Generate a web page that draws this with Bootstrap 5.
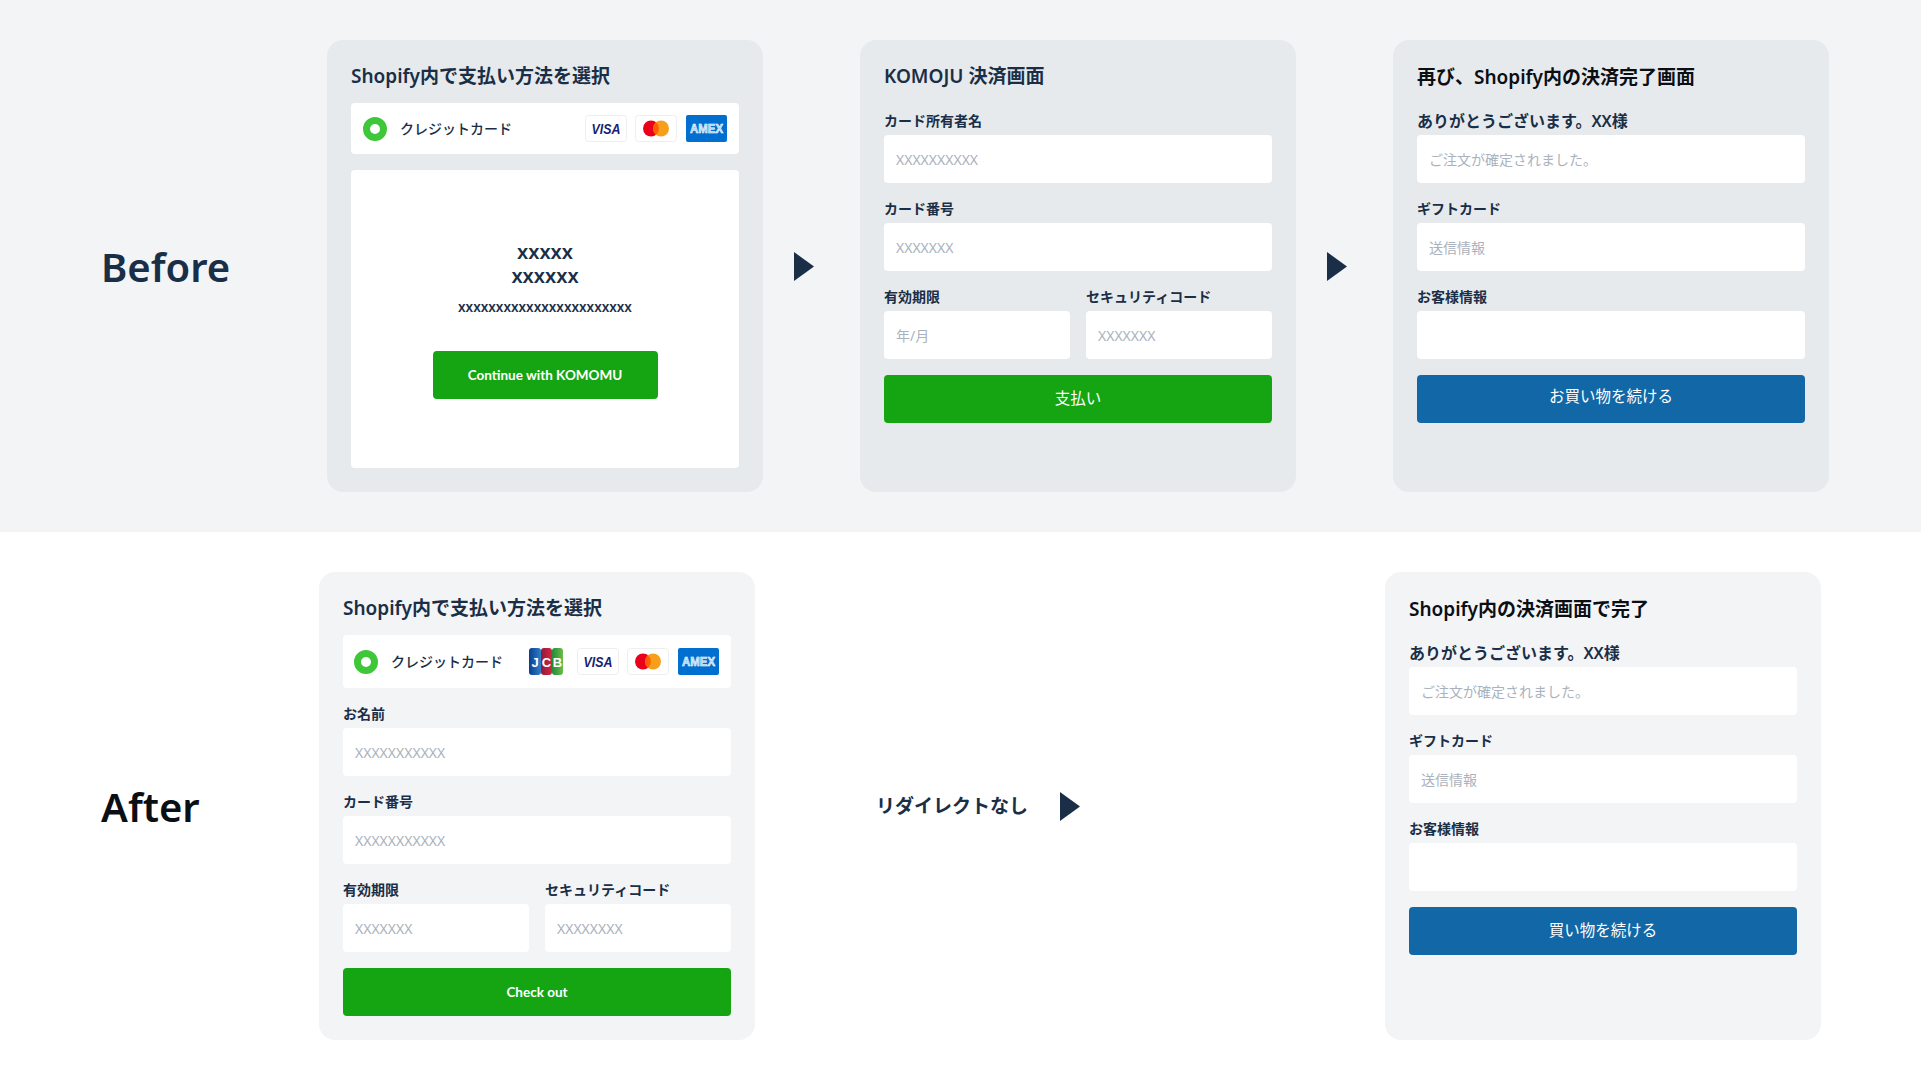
<!DOCTYPE html>
<html lang="ja">
<head>
<meta charset="utf-8">
<title>Before / After</title>
<link href="https://cdn.jsdelivr.net/npm/bootstrap@5.3.0/dist/css/bootstrap.min.css" rel="stylesheet">
<style>
html,body{margin:0;background:#fff}
body{font-family:"Noto Sans","Noto Sans CJK JP",sans-serif;color:#1a2f47;height:1080px;overflow:hidden}
.fl-band{height:532px;padding:40px 0;background:#f3f4f6}
.fl-band-after{height:548px;padding:40px 0;background:#fff}
.fl-side{width:327px;padding-left:101px;padding-top:2px;font-size:40px;font-weight:600;line-height:1}
.fl-side-after{width:319px;color:#0b0f14}
.fl-panel{width:436px;height:452px;border-radius:16px;padding:24px;background:#e7eaec}
.fl-band-after .fl-panel{height:468px;background:#f3f4f6}
.fl-title{font-size:19px;font-weight:600;line-height:24px;margin-bottom:23px}
.fl-title-tight{margin-bottom:15px}
.fl-dark{color:#0b0f14;padding-top:1px;margin-bottom:22px}
.fl-gap{width:97px;padding-left:31px}
.fl-tri{display:block;width:20px;height:29px;fill:#1a2f47}
.fl-pay{height:51px;background:#fff;border-radius:4px;padding:0 12px 0 12px;font-size:14px;font-weight:500}
.fl-pay-tall{height:53px;margin-bottom:16px;padding-left:11px}
.fl-radio{width:24px;height:24px;border-radius:50%;border:7px solid #3fc73a;background:#fff;margin-right:13px}
.fl-logo{display:block;width:42px;height:27px;margin-left:8px}
.fl-logo-amex{width:41px;margin-left:9px}
.fl-logo-jcb{width:34px;margin-right:6px}
.fl-label{font-size:14px;font-weight:600;line-height:20px;margin-bottom:4px}
.fl-label-lg{font-size:16px}
.fl-input.form-control{height:48px;border:0;border-radius:4px;padding:0 12px;font-size:14px;font-weight:400;background:#fff;margin-bottom:16px}
.fl-input.form-control::placeholder{color:#aab2bd;opacity:1}
.fl-cta.btn{display:block;width:100%;height:48px;border:0;border-radius:4px;color:#fff;font-size:15.5px;padding:0;line-height:1.5}
.fl-green.btn{background:#15a513}
.fl-blue.btn{background:#1268a6}
.fl-lift.btn{padding-bottom:5px}
.fl-hand.btn{font-family:Lato,"Noto Sans",sans-serif;font-size:13.5px;font-weight:700}
.fl-cta-inset.btn{width:225px;margin:0 auto}
.fl-box{height:298px;margin-top:16px;background:#fff;border-radius:4px;padding-top:70px;text-align:center}
.fl-xl{font-size:20px;font-weight:600;line-height:24px}
.fl-xs{font-size:13.5px;font-weight:600;line-height:20px;margin:9px 0 34px}
.fl-mid{width:630px;padding-left:121px;font-size:19px;font-weight:600}
.fl-mid span{width:184px}
</style>
</head>
<body>
<svg width="0" height="0" class="position-absolute"><defs>
<linearGradient id="jb" x1="0" x2="1" y1="0" y2="0"><stop offset="0" stop-color="#0a3f8f"/><stop offset="1" stop-color="#2f7fc8"/></linearGradient>
<linearGradient id="jr" x1="0" x2="1" y1="0" y2="0"><stop offset="0" stop-color="#8d1c3c"/><stop offset="1" stop-color="#d8263f"/></linearGradient>
<linearGradient id="jg" x1="0" x2="1" y1="0" y2="0"><stop offset="0" stop-color="#1f8a3c"/><stop offset="1" stop-color="#6cbd4a"/></linearGradient>
</defs></svg>
<section class="fl-band d-flex align-items-stretch">
  <div class="fl-side d-flex align-items-center">Before</div>
  <div class="fl-panel">
    <div class="fl-title fl-title-tight">Shopify内で支払い方法を選択</div>
    <div class="fl-pay d-flex align-items-center">
      <i class="fl-radio"></i><span class="me-auto">クレジットカード</span>
      <svg class="fl-logo" viewBox="0 0 42 27"><rect x=".5" y=".5" width="41" height="26" rx="3" fill="#fff" stroke="#eceef0"/><text x="21" y="18.5" text-anchor="middle" textLength="29" lengthAdjust="spacingAndGlyphs" font-family="Liberation Sans" font-style="italic" font-weight="700" font-size="14" fill="#1a1f71">VISA</text></svg>
      <svg class="fl-logo" viewBox="0 0 42 27"><rect x=".5" y=".5" width="41" height="26" rx="3" fill="#fff" stroke="#eceef0"/><circle cx="16" cy="13.5" r="8" fill="#eb001b"/><circle cx="26" cy="13.5" r="8" fill="#f79e1b"/><path d="M21 7.3a8 8 0 0 1 0 12.4a8 8 0 0 1 0-12.4z" fill="#ff5f00"/></svg>
      <svg class="fl-logo fl-logo-amex" viewBox="0 0 41 27"><rect width="41" height="27" rx="2" fill="#016fd0"/><text x="20.5" y="18" text-anchor="middle" textLength="33" lengthAdjust="spacingAndGlyphs" font-family="Liberation Sans" font-weight="700" font-size="13" fill="#9ccbf2" stroke="#fff" stroke-width=".6">AMEX</text></svg>
    </div>
    <div class="fl-box">
      <div class="fl-xl">xxxxx<br>xxxxxx</div>
      <div class="fl-xs">xxxxxxxxxxxxxxxxxxxxxxx</div>
      <button type="button" class="btn fl-cta fl-cta-inset fl-green fl-hand">Continue with KOMOMU</button>
    </div>
  </div>
  <div class="fl-gap d-flex align-items-center"><svg class="fl-tri" viewBox="0 0 20 29"><polygon points="0,0 20,14.5 0,29"/></svg></div>
  <div class="fl-panel">
    <div class="fl-title">KOMOJU 決済画面</div>
    <div class="fl-label">カード所有者名</div>
    <input class="form-control fl-input" placeholder="XXXXXXXXXX">
    <div class="fl-label">カード番号</div>
    <input class="form-control fl-input" placeholder="XXXXXXX">
    <div class="row gx-3">
      <div class="col-6"><div class="fl-label">有効期限</div><input class="form-control fl-input" placeholder="年/月"></div>
      <div class="col-6"><div class="fl-label">セキュリティコード</div><input class="form-control fl-input" placeholder="XXXXXXX"></div>
    </div>
    <button type="button" class="btn fl-cta fl-green">支払い</button>
  </div>
  <div class="fl-gap d-flex align-items-center"><svg class="fl-tri" viewBox="0 0 20 29"><polygon points="0,0 20,14.5 0,29"/></svg></div>
  <div class="fl-panel">
    <div class="fl-title fl-dark">再び、Shopify内の決済完了画面</div>
    <div class="fl-label fl-label-lg">ありがとうございます。XX様</div>
    <input class="form-control fl-input" placeholder="ご注文が確定されました。">
    <div class="fl-label">ギフトカード</div>
    <input class="form-control fl-input" placeholder="送信情報">
    <div class="fl-label">お客様情報</div>
    <input class="form-control fl-input">
    <button type="button" class="btn fl-cta fl-blue fl-lift">お買い物を続ける</button>
  </div>
</section>
<section class="fl-band-after d-flex align-items-stretch">
  <div class="fl-side fl-side-after d-flex align-items-center">After</div>
  <div class="fl-panel">
    <div class="fl-title fl-title-tight">Shopify内で支払い方法を選択</div>
    <div class="fl-pay fl-pay-tall d-flex align-items-center">
      <i class="fl-radio"></i><span class="me-auto">クレジットカード</span>
      <svg class="fl-logo fl-logo-jcb" viewBox="0 0 34 27"><rect x="0" y="0" width="12" height="27" rx="3" fill="url(#jb)"/><rect x="12" y="0" width="11" height="27" rx="3" fill="url(#jr)"/><rect x="23" y="0" width="11" height="27" rx="3" fill="url(#jg)"/><text x="6" y="18.5" text-anchor="middle" font-family="Liberation Sans" font-weight="700" font-size="13" fill="#fff">J</text><text x="17.5" y="18.5" text-anchor="middle" font-family="Liberation Sans" font-weight="700" font-size="13" fill="#fff">C</text><text x="28.5" y="18.5" text-anchor="middle" font-family="Liberation Sans" font-weight="700" font-size="13" fill="#fff">B</text></svg>
      <svg class="fl-logo" viewBox="0 0 42 27"><rect x=".5" y=".5" width="41" height="26" rx="3" fill="#fff" stroke="#eceef0"/><text x="21" y="18.5" text-anchor="middle" textLength="29" lengthAdjust="spacingAndGlyphs" font-family="Liberation Sans" font-style="italic" font-weight="700" font-size="14" fill="#1a1f71">VISA</text></svg>
      <svg class="fl-logo" viewBox="0 0 42 27"><rect x=".5" y=".5" width="41" height="26" rx="3" fill="#fff" stroke="#eceef0"/><circle cx="16" cy="13.5" r="8" fill="#eb001b"/><circle cx="26" cy="13.5" r="8" fill="#f79e1b"/><path d="M21 7.3a8 8 0 0 1 0 12.4a8 8 0 0 1 0-12.4z" fill="#ff5f00"/></svg>
      <svg class="fl-logo fl-logo-amex" viewBox="0 0 41 27"><rect width="41" height="27" rx="2" fill="#016fd0"/><text x="20.5" y="18" text-anchor="middle" textLength="33" lengthAdjust="spacingAndGlyphs" font-family="Liberation Sans" font-weight="700" font-size="13" fill="#9ccbf2" stroke="#fff" stroke-width=".6">AMEX</text></svg>
    </div>
    <div class="fl-label">お名前</div>
    <input class="form-control fl-input" placeholder="XXXXXXXXXXX">
    <div class="fl-label">カード番号</div>
    <input class="form-control fl-input" placeholder="XXXXXXXXXXX">
    <div class="row gx-3">
      <div class="col-6"><div class="fl-label">有効期限</div><input class="form-control fl-input" placeholder="XXXXXXX"></div>
      <div class="col-6"><div class="fl-label">セキュリティコード</div><input class="form-control fl-input" placeholder="XXXXXXXX"></div>
    </div>
    <button type="button" class="btn fl-cta fl-green fl-hand">Check out</button>
  </div>
  <div class="fl-mid d-flex align-items-center"><span>リダイレクトなし</span><svg class="fl-tri" viewBox="0 0 20 29"><polygon points="0,0 20,14.5 0,29"/></svg></div>
  <div class="fl-panel">
    <div class="fl-title fl-dark">Shopify内の決済画面で完了</div>
    <div class="fl-label fl-label-lg">ありがとうございます。XX様</div>
    <input class="form-control fl-input" placeholder="ご注文が確定されました。">
    <div class="fl-label">ギフトカード</div>
    <input class="form-control fl-input" placeholder="送信情報">
    <div class="fl-label">お客様情報</div>
    <input class="form-control fl-input">
    <button type="button" class="btn fl-cta fl-blue">買い物を続ける</button>
  </div>
</section>
<script src="https://cdn.jsdelivr.net/npm/bootstrap@5.3.0/dist/js/bootstrap.bundle.min.js"></script>
</body>
</html>
